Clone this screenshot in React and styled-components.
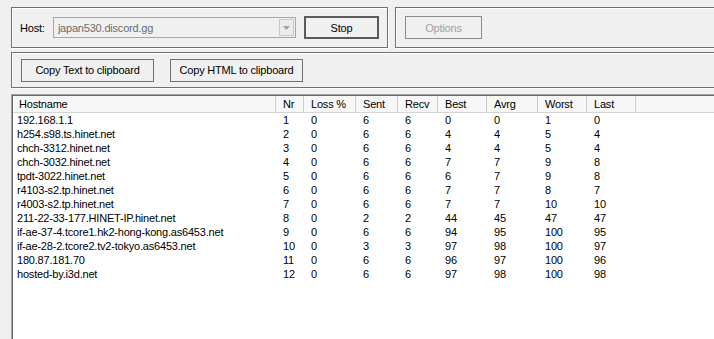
import React from 'react';
import styled, { createGlobalStyle } from 'styled-components';

const GlobalStyle = createGlobalStyle`
  html, body {
    margin: 0;
    padding: 0;
    background: #f0f0f0;
    overflow: hidden;
  }
  body {
    font-family: "Liberation Sans", Arial, sans-serif;
    font-size: 11px;
    letter-spacing: -0.2px;
    color: #000;
  }
`;

const columns = [
  { key: 'host', label: 'Hostname', width: 263 },
  { key: 'nr', label: 'Nr', width: 28 },
  { key: 'loss', label: 'Loss %', width: 52 },
  { key: 'sent', label: 'Sent', width: 42 },
  { key: 'recv', label: 'Recv', width: 40 },
  { key: 'best', label: 'Best', width: 49 },
  { key: 'avrg', label: 'Avrg', width: 51 },
  { key: 'worst', label: 'Worst', width: 49 },
  { key: 'last', label: 'Last', width: 49 },
];

const hops = [
  ['192.168.1.1', 1, 0, 6, 6, 0, 0, 1, 0],
  ['h254.s98.ts.hinet.net', 2, 0, 6, 6, 4, 4, 5, 4],
  ['chch-3312.hinet.net', 3, 0, 6, 6, 4, 4, 5, 4],
  ['chch-3032.hinet.net', 4, 0, 6, 6, 7, 7, 9, 8],
  ['tpdt-3022.hinet.net', 5, 0, 6, 6, 6, 7, 9, 8],
  ['r4103-s2.tp.hinet.net', 6, 0, 6, 6, 7, 7, 8, 7],
  ['r4003-s2.tp.hinet.net', 7, 0, 6, 6, 7, 7, 10, 10],
  ['211-22-33-177.HINET-IP.hinet.net', 8, 0, 2, 2, 44, 45, 47, 47],
  ['if-ae-37-4.tcore1.hk2-hong-kong.as6453.net', 9, 0, 6, 6, 94, 95, 100, 95],
  ['if-ae-28-2.tcore2.tv2-tokyo.as6453.net', 10, 0, 3, 3, 97, 98, 100, 97],
  ['180.87.181.70', 11, 0, 6, 6, 96, 97, 100, 96],
  ['hosted-by.i3d.net', 12, 0, 6, 6, 97, 98, 100, 98],
];

const App = () => {
  return (
    <Window>
      <GlobalStyle />
      <TopRow>
        <GroupBox width="377px" pad="8px">
          <Label>Host:</Label>
          <Combo>
            <ComboText>japan530.discord.gg</ComboText>
            <ComboArrow>
              <svg width="7" height="4" viewBox="0 0 7 4">
                <path d="M0 0 H7 L3.5 4 Z" fill="#a0a0a0" />
              </svg>
            </ComboArrow>
          </Combo>
          <Button isDefault width="75px">Stop</Button>
        </GroupBox>
        <GroupBox width="340px" pad="9px">
          <Button disabled width="77px">Options</Button>
        </GroupBox>
      </TopRow>
      <ClipRow>
        <Button width="133px">Copy Text to clipboard</Button>
        <Button width="133px">Copy HTML to clipboard</Button>
      </ClipRow>
      <ListView>
        <HeaderRow>
          {columns.map((c, i) => (
            <HeaderCell key={c.key} w={c.width} first={i === 0}>{c.label}</HeaderCell>
          ))}
        </HeaderRow>
        {hops.map((row) => (
          <Row key={row[1]}>
            {row.map((v, i) => (
              <Cell key={columns[i].key} w={columns[i].width} first={i === 0}>{v}</Cell>
            ))}
          </Row>
        ))}
      </ListView>
    </Window>
  );
};

const Window = styled.div`
  width: 714px;
  height: 339px;
  display: flex;
  flex-direction: column;
  padding: 7px 0 0 11px;
  box-sizing: border-box;
  overflow: hidden;
`;

const TopRow = styled.div`
  display: flex;
  gap: 7px;
  height: 41px;
`;

const GroupBox = styled.div`
  flex: none;
  width: ${({ width }) => width};
  box-sizing: border-box;
  border: 1px solid #707070;
  box-shadow: inset 1px 1px 0 #fff, 1px 1px 0 #fff;
  display: flex;
  align-items: center;
  padding: 0 ${({ pad }) => pad || '7px'};
`;

const Label = styled.span`
  width: 33px;
  padding-top: 1px;
`;

const Combo = styled.div`
  width: 244px;
  height: 21px;
  box-sizing: border-box;
  border: 1px solid #a8a8a8;
  background: #f0f0f0;
  display: flex;
  align-items: center;
  margin-right: 8px;
  padding: 1px;
`;

const ComboText = styled.span`
  flex: 1;
  color: #6d6d6d;
  padding-left: 3px;
`;

const ComboArrow = styled.div`
  width: 15px;
  height: 17px;
  box-sizing: border-box;
  border: 1px solid #c8c8c8;
  background: #ececec;
  display: flex;
  align-items: center;
  justify-content: center;
`;

const Button = styled.button`
  flex: none;
  width: ${({ width }) => width};
  height: 23px;
  box-sizing: border-box;
  border: ${({ isDefault }) => (isDefault ? '2px solid #5a5a5a' : '1px solid #707070')};
  border-color: ${({ disabled }) => (disabled ? '#8c8c8c' : '')};
  background: #f0f0f0;
  font-family: "Liberation Sans", Arial, sans-serif;
  font-size: 11px;
  letter-spacing: -0.2px;
  color: ${({ disabled }) => (disabled ? '#a0a0a0' : '#000')};
  padding: 0;
  border-radius: 0;
`;

const ClipRow = styled.div`
  display: flex;
  gap: 16px;
  align-items: center;
  height: 36px;
  width: 720px;
  margin-top: 4px;
  box-sizing: border-box;
  border: 1px solid #707070;
  box-shadow: inset 1px 1px 0 #fff, 1px 1px 0 #fff;
  padding: 0 0 0 9px;
`;

const ListView = styled.div`
  flex: 1;
  margin-top: 6px;
  width: 720px;
  background: #fff;
  border-top: 1px solid #a0a0a0;
  border-left: 1px solid #a0a0a0;
  box-shadow: inset 1px 1px 0 #696969;
`;

const HeaderRow = styled.div`
  display: flex;
  height: 16px;
  margin: 1px 0 0 1px;
  background: #f7f7f7;
  border-bottom: 1px solid #d5d5d5;
`;

const HeaderCell = styled.div`
  flex: none;
  width: ${({ w }) => w}px;
  box-sizing: border-box;
  padding: 1px 0 0 ${({ first }) => (first ? '6px' : '7px')};
  border-right: 1px solid #cdcdcd;
  line-height: 14px;
`;

const Row = styled.div`
  display: flex;
  height: 14px;
  line-height: 14px;
  margin-left: 1px;
`;

const Cell = styled.div`
  flex: none;
  width: ${({ w }) => w}px;
  box-sizing: border-box;
  padding-left: ${({ first }) => (first ? '4px' : '7px')};
  white-space: nowrap;
`;

export default App;
